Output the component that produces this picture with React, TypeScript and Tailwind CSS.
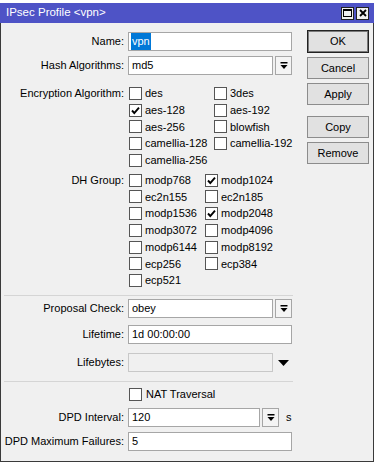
import type { ReactNode } from "react";

function DropIcon() {
  return (
    <svg width="8" height="8" viewBox="0 0 8 8">
      <rect x="0.5" y="0" width="7" height="1.5" fill="#000" />
      <polygon points="0.5,3 7.5,3 4,7" fill="#000" />
    </svg>
  );
}

function Check({ checked }: { checked?: boolean }) {
  return (
    <div className="w-[13px] h-[13px] shrink-0 border border-[#555] bg-white flex items-center justify-center">
      {checked && (
        <svg width="11" height="11" viewBox="0 0 11 11">
          <path d="M2 5.5 L4.3 8 L9 2.6" fill="none" stroke="#000" strokeWidth="1.9" />
        </svg>
      )}
    </div>
  );
}

function Label({ children }: { children?: ReactNode }) {
  return <div className="w-[123px] shrink-0 text-right whitespace-nowrap">{children}</div>;
}

function Input({ value, w = "w-[164px]", selected }: { value: string; w?: string; selected?: boolean }) {
  return (
    <div className={`${w} h-[19px] ml-[4px] border border-[#a6a6a6] bg-white flex items-center px-[2px]`}>
      {selected ? <span className="bg-[#0078d7] text-white px-[1px]">{value}</span> : <span className="px-[1px]">{value}</span>}
    </div>
  );
}

function Drop({ value, w = "w-[145px]" }: { value: string; w?: string }) {
  return (
    <div className="flex items-center">
      <Input value={value} w={w} />
      <div className="w-[17px] h-[19px] ml-[2px] border border-[#a6a6a6] bg-[#f4f4f4] flex items-center justify-center">
        <DropIcon />
      </div>
    </div>
  );
}

function Box({ label, checked }: { label: string; checked?: boolean }) {
  return (
    <div className="flex items-center h-[16.75px]">
      <Check checked={checked} />
      <span className="ml-[3px] whitespace-nowrap">{label}</span>
    </div>
  );
}

function CheckGroup({ label, items, col }: { label: string; items: [string, boolean][]; col: string }) {
  return (
    <div className="flex">
      <div className="w-[123px] shrink-0 text-right h-[16.75px] flex items-center justify-end">{label}</div>
      <div className={`ml-[5px] grid ${col}`}>
        {items.map(([l, c]) => (
          <Box key={l} label={l} checked={c} />
        ))}
      </div>
    </div>
  );
}

function Btn({ children, def, className = "" }: { children: ReactNode; def?: boolean; className?: string }) {
  return (
    <div
      className={`w-[62px] flex items-center justify-center bg-[#e1e1e1] border ${
        def ? "border-[#222] shadow-[inset_0_0_0_1px_#7a7a7a]" : "border-[#8c8c8c]"
      } ${className}`}
    >
      {children}
    </div>
  );
}

export default function App() {
  return (
    <div className="w-[377px] h-[464px] bg-white pt-[3px] font-['Liberation_Sans',Arial,sans-serif] text-[11px] text-black">
      <div className="w-[374px] h-[459px] flex flex-col">
        <div className="h-[20px] bg-[#4e53c6] flex items-center pl-[6px] pr-[5px] text-white text-[11.5px]">
          <span>IPsec Profile &lt;vpn&gt;</span>
          <div className="ml-auto flex gap-[2px]">
            <div className="w-[13px] h-[13px] bg-[#f0f0f0] border border-[#222] flex items-center justify-center">
              <div className="w-[9px] h-[8px] border border-black border-t-2" />
            </div>
            <div className="w-[13px] h-[13px] bg-[#f0f0f0] border border-[#222] flex items-center justify-center">
              <svg width="8" height="8" viewBox="0 0 8 8">
                <path d="M1 1 L7 7 M7 1 L1 7" stroke="#000" strokeWidth="1.8" />
              </svg>
            </div>
          </div>
        </div>
        <div className="flex-1 flex bg-[#f0f0f0] border-x border-b border-[#3a3a3a]">
          <div className="w-[305px] pt-[9px]">
            <div className="flex items-center">
              <Label>Name:</Label>
              <Input value="vpn" selected />
            </div>
            <div className="flex items-center mt-[5px]">
              <Label>Hash Algorithms:</Label>
              <Drop value="md5" />
            </div>
            <div className="mt-[10px]">
              <CheckGroup
                label="Encryption Algorithm:"
                col="grid-cols-[85px_auto]"
                items={[
                  ["des", false],
                  ["3des", false],
                  ["aes-128", true],
                  ["aes-192", false],
                  ["aes-256", false],
                  ["blowfish", false],
                  ["camellia-128", false],
                  ["camellia-192", false],
                  ["camellia-256", false],
                ]}
              />
            </div>
            <div className="mt-[3px]">
              <CheckGroup
                label="DH Group:"
                col="grid-cols-[76px_auto]"
                items={[
                  ["modp768", false],
                  ["modp1024", true],
                  ["ec2n155", false],
                  ["ec2n185", false],
                  ["modp1536", false],
                  ["modp2048", true],
                  ["modp3072", false],
                  ["modp4096", false],
                  ["modp6144", false],
                  ["modp8192", false],
                  ["ecp256", false],
                  ["ecp384", false],
                  ["ecp521", false],
                ]}
              />
            </div>
            <div className="mt-[6px] ml-[3px] w-[289px] h-px bg-[#d5d5d5]" />
            <div className="flex items-center mt-[3px]">
              <Label>Proposal Check:</Label>
              <Drop value="obey" />
            </div>
            <div className="flex items-center mt-[7px]">
              <Label>Lifetime:</Label>
              <Input value="1d 00:00:00" />
            </div>
            <div className="flex items-center mt-[9px]">
              <Label>Lifebytes:</Label>
              <div className="w-[145px] h-[19px] ml-[4px] border border-[#c8c8c8] bg-[#f0f0f0]" />
              <svg className="ml-[5px]" width="11" height="6" viewBox="0 0 11 6">
                <polygon points="0,0 11,0 5.5,6" fill="#000" />
              </svg>
            </div>
            <div className="mt-[8.5px] ml-[3px] w-[289px] h-px bg-[#d5d5d5]" />
            <div className="flex items-center h-[17px] mt-[4px]">
              <Label />
              <div className="ml-[5px] flex items-center">
                <Check />
                <span className="ml-[4px]">NAT Traversal</span>
              </div>
            </div>
            <div className="flex items-center mt-[5.5px]">
              <Label>DPD Interval:</Label>
              <Drop value="120" w="w-[132px]" />
              <span className="ml-[7px]">s</span>
            </div>
            <div className="flex items-center mt-[5px]">
              <Label>DPD Maximum Failures:</Label>
              <Input value="5" />
            </div>
          </div>
          <div className="flex flex-col pt-[7px] ml-[1px]">
            <Btn def className="h-[23px]">OK</Btn>
            <Btn className="h-[22px] mt-[4px]">Cancel</Btn>
            <Btn className="h-[22px] mt-[4px]">Apply</Btn>
            <Btn className="h-[22px] mt-[11px]">Copy</Btn>
            <Btn className="h-[22px] mt-[4px]">Remove</Btn>
          </div>
        </div>
      </div>
    </div>
  );
}
